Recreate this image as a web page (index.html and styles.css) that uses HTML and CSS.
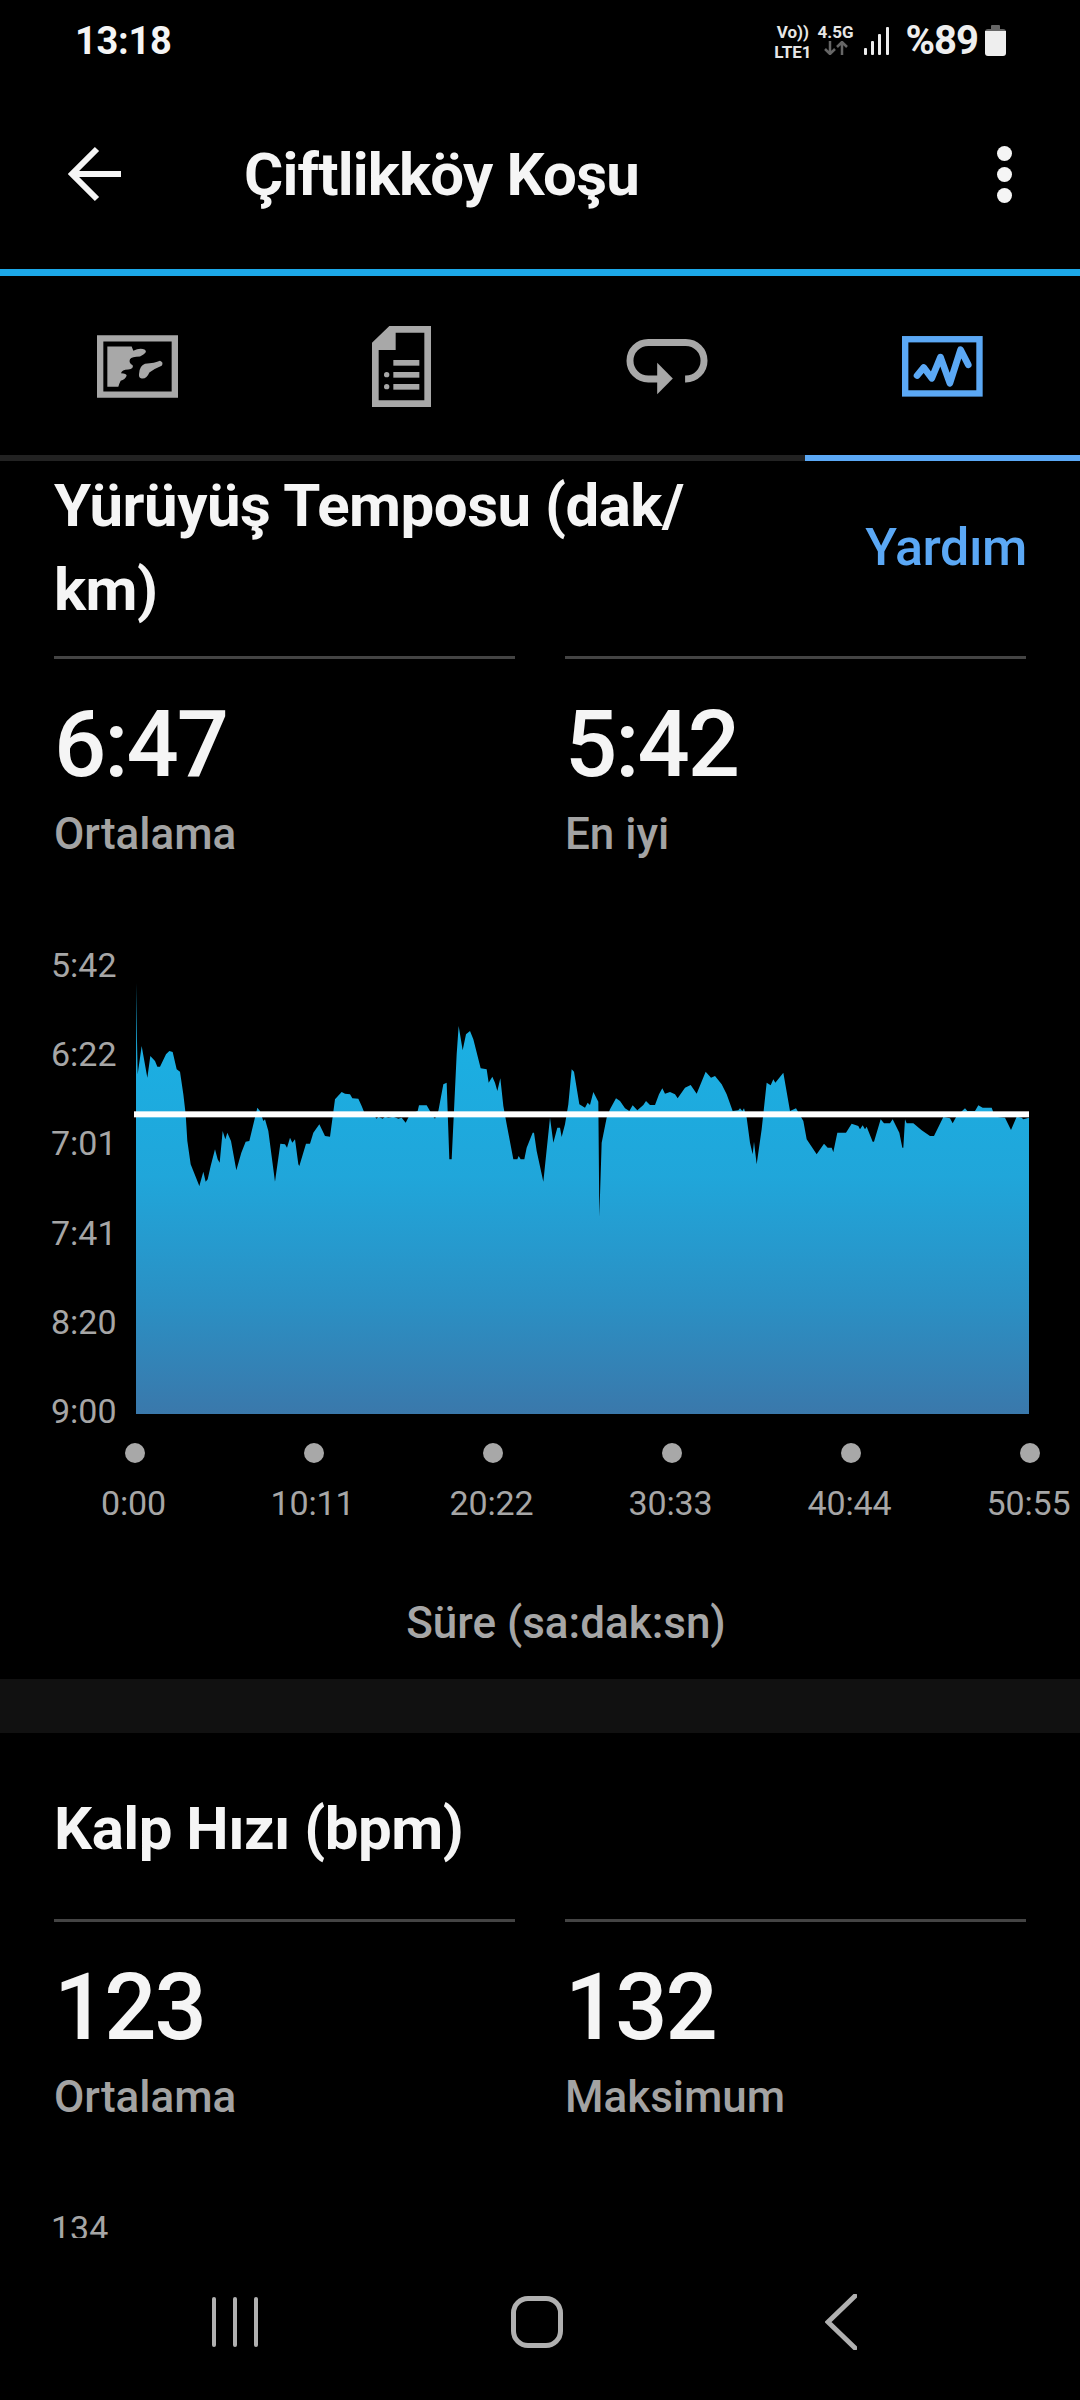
FILE: index.html
```html
<!DOCTYPE html>
<html lang="tr">
<head>
<meta charset="utf-8">
<title>Çiftlikköy Koşu</title>
<link rel="stylesheet" href="styles.css">
</head>
<body>
<div class="phone">
  <div class="status">
    <span class="time">13:18</span>
    <div class="status-right">
      <div class="net"><span class="volte">Vo))</span><span>LTE1</span></div>
      <div class="net net-g"><span>4.5G</span>
        <svg class="arrows" viewBox="0 0 24 14" width="24" height="14"><path d="M6 0V13M1 8l5 5 5-5" class="arrow-dim"/><path d="M18 14V1M13 6l5-5 5 5" class="arrow-dim"/></svg>
      </div>
      <svg class="signal" viewBox="0 0 25 28" width="25" height="28"><rect x="0" y="21" width="3" height="7" rx="1"/><rect x="7" y="14" width="3" height="14" rx="1"/><rect x="14" y="7" width="3" height="21" rx="1"/><rect x="22" y="0" width="3" height="28" rx="1"/></svg>
      <span class="pct">%89</span>
      <svg class="battery" viewBox="0 0 21 31" width="21" height="31"><path class="bat-top" d="M7 0h7a1 1 0 0 1 1 1v3h3a3 3 0 0 1 3 3v3H0V7a3 3 0 0 1 3-3h3V1a1 1 0 0 1 1-1z"/><path class="bat-body" d="M0 6h21v22a3 3 0 0 1-3 3H3a3 3 0 0 1-3-3z"/></svg>
    </div>
  </div>

  <header class="appbar">
    <svg class="back" viewBox="0 0 60 60" width="60" height="60"><path d="M36 4 11 29l25 25M11 29h50"/></svg>
    <h1 class="appbar-title">Çiftlikköy Koşu</h1>
    <div class="kebab"><i></i><i></i><i></i></div>
  </header>

  <nav class="tabs">
    <div class="tab">
      <svg viewBox="111 108 243 188" width="81" height="63" class="ico-gray"><path fill-rule="evenodd" d="M111 108H354V296H111ZM130 127V277H335V127Z"/><path d="M142 142H215L220 155Q240 145 255 152Q265 160 240 172Q215 172 210 180Q205 190 218 198Q222 208 205 211Q185 212 183 222Q200 222 200 230Q195 242 182 245Q177 255 175 263H142Z"/><path d="M237 225Q238 200 255 194Q285 192 300 185Q312 190 305 200Q285 208 268 220Q260 240 245 238Q236 236 237 225Z"/></svg>
    </div>
    <div class="tab">
      <svg viewBox="936 78 177 243" width="59" height="81" class="ico-gray"><path fill-rule="evenodd" d="M988 78H1113V321H936V128ZM956 150V301H1093V98H1007V150Z"/><rect x="1000" y="180" width="78" height="17"/><rect x="1000" y="216" width="78" height="17"/><rect x="1000" y="252" width="78" height="17"/><circle cx="980" cy="224" r="8"/><circle cx="980" cy="260" r="8"/></svg>
    </div>
    <div class="tab">
      <svg viewBox="40 50 265 180" width="88" height="60" class="ico-gray"><path class="loop" d="M227 176H229A55 55 0 0 0 229 66H116A55 55 0 0 0 116 176H150"/><path d="M143 127 190 175 143 222Z"/></svg>
    </div>
    <div class="tab tab-active">
      <svg viewBox="877 49 242 182" width="81" height="61" class="ico-blue"><rect class="frame" x="886.5" y="58.5" width="222" height="162"/><path class="wave" d="M922 167 942 143 966 175 992 112 1020 190 1052 90 1075 135"/></svg>
    </div>
  </nav>

  <main class="scroll">
    <section class="metric">
      <div class="metric-head">
        <h2 class="metric-title metric-title-wrap">Yürüyüş Temposu (dak/<wbr>km)</h2>
        <a class="help">Yardım</a>
      </div>
      <div class="stats">
        <div class="stat"><div class="stat-value">6:47</div><div class="stat-label">Ortalama</div></div>
        <div class="stat"><div class="stat-value">5:42</div><div class="stat-label">En iyi</div></div>
      </div>
      <div class="chart-row">
        <div class="y-axis"><span>5:42</span><span>6:22</span><span>7:01</span><span>7:41</span><span>8:20</span><span>9:00</span></div>
        <svg class="plot" viewBox="282 96 2685 1293" width="895" height="431">
          <defs>
            <linearGradient id="pace" gradientUnits="userSpaceOnUse" x1="0" y1="96" x2="0" y2="1389">
              <stop offset="0" stop-color="#19b3e6"/>
              <stop offset="0.45" stop-color="#20a6da"/>
              <stop offset="0.75" stop-color="#2b8fc3"/>
              <stop offset="1" stop-color="#3a78ab"/>
            </linearGradient>
          </defs>
          <path fill="url(#pace)" d="M288 1389V370L289 96 291 270 293 370 305 285 322 380 331 315 345 330 352 347 360 347 378 310 388 300 398 303 410 355 420 362 430 430 437 490 442 570 452 640 478 705 490 662 497 692 503 685 512 645 525 595 533 625 539 635 548 540 556 565 562 545 573 570 589 658 604 605 617 572 628 570 652 470 660 480 670 510 675 505 685 540 705 692 721 578 735 580 741 590 750 560 757 575 765 565 775 640 778 645 798 578 810 578 820 545 838 520 855 555 870 557 885 445 905 423 915 428 930 430 937 442 955 443 965 465 975 490 1005 497 1010 503 1015 497 1028 503 1035 497 1045 500 1060 497 1075 503 1085 500 1097 515 1110 490 1133 480 1137 463 1160 463 1170 480 1180 497 1185 503 1195 480 1210 400 1220 395 1228 625 1235 625 1250 310 1256 225 1268 298 1278 250 1290 240 1300 265 1322 352 1340 355 1346 395 1357 377 1365 395 1372 420 1381 382 1390 465 1400 520 1420 625 1432 625 1436 615 1442 625 1453 625 1460 590 1478 545 1482 545 1490 600 1510 692 1530 500 1540 575 1552 530 1560 530V1389Z"/>
          <path fill="url(#pace)" transform="translate(1560 0)" d="M0 1389V530L5 558 15 520 25 460 35 355 42 362 58 460 75 470 83 455 90 462 100 423 115 452 118 797 125 575 140 500 150 475 168 442 180 450 195 472 208 480 218 463 232 478 250 462 258 450 270 462 285 462 297 430 307 412 315 428 330 423 345 430 353 442 375 410 392 402 410 428 437 362 453 380 465 375 485 400 500 430 518 480 535 478 540 472 547 480 552 472 560 500 570 575 578 610 582 572 590 640 605 535 620 395 632 403 640 385 646 395 670 365 690 480 708 472 730 510 740 565 770 610 792 578 803 590 815 590 820 603 832 545 858 545 875 518 895 525 900 535 908 523 915 535 920 527 938 572 942 572 962 505 972 517 990 517 998 505 1018 545 1027 590 1030 590 1035 505 1040 517 1060 517 1085 538 1110 555 1122 555 1150 498 1170 502 1178 517 1190 495 1215 472 1222 480 1245 480 1255 463 1268 470 1295 470 1305 497 1335 500 1353 537 1370 497 1385 500 1390 505 1407 500V1389Z"/>
          <rect x="282" y="481" width="2685" height="18" fill="#fff"/>
        </svg>
      </div>
      <div class="x-dots"><i></i><i></i><i></i><i></i><i></i><i></i></div>
      <div class="x-labels"><span>0:00</span><span>10:11</span><span>20:22</span><span>30:33</span><span>40:44</span><span>50:55</span></div>
      <div class="x-title">Süre (sa:dak:sn)</div>
    </section>
    <div class="band"></div>
    <section class="metric metric-second">
      <div class="metric-head"><h2 class="metric-title">Kalp Hızı (bpm)</h2></div>
      <div class="stats">
        <div class="stat"><div class="stat-value">123</div><div class="stat-label">Ortalama</div></div>
        <div class="stat"><div class="stat-value">132</div><div class="stat-label">Maksimum</div></div>
      </div>
      <div class="chart-row"><div class="y-axis"><span>134</span></div></div>
    </section>
  </main>

  <footer class="navbar">
    <div class="recents"><i></i><i></i><i></i></div>
    <div class="home"></div>
    <svg class="nav-back" viewBox="0 0 32 56" width="32" height="56"><path d="M30 2 3 28l27 26"/></svg>
  </footer>
</div>
</body>
</html>
```

FILE: styles.css
```css
* { box-sizing: border-box; }
html, body { margin: 0; padding: 0; background: #000; }
.phone {
  width: 1080px; height: 2400px; overflow: hidden;
  display: flex; flex-direction: column;
  background: #000; color: #f5f5f5;
  font-family: Roboto, "Noto Sans", sans-serif;
}
/* status bar */
.status { height: 80px; flex: none; display: flex; justify-content: space-between; align-items: flex-start; padding: 18px 74px 0 75px; }
.time { font-size: 38px; line-height: 46px; font-weight: 700; letter-spacing: -0.3px; }
.status-right { display: flex; align-items: flex-start; }
.net { display: flex; flex-direction: column; align-items: center; font-size: 17px; line-height: 20px; font-weight: 700; color: #e6e6e6; padding-top: 4px; margin-right: 6px; }
.net-g { margin-right: 10px; }
.arrows { margin-top: -1px; }
.arrow-dim { fill: none; stroke: #666; stroke-width: 2.5; }
.signal { fill: #eee; margin-top: 9px; margin-right: 17px; }
.pct { font-size: 40px; line-height: 46px; font-weight: 700; color: #eee; margin-right: 7px; letter-spacing: -1px; }
.battery { margin-top: 7px; }
.bat-top { fill: #666; }
.bat-body { fill: #eee; }
/* app bar */
.appbar { height: 189px; flex: none; display: flex; align-items: center; padding-left: 61px; padding-right: 68px; }
.back { fill: none; stroke: #f5f5f5; stroke-width: 6; flex: none; }
.appbar-title { margin: 0 0 0 123px; flex: 1; font-size: 60px; line-height: 70px; font-weight: 700; letter-spacing: -0.8px; }
.kebab { display: flex; flex-direction: column; gap: 6px; }
.kebab i { display: block; width: 15px; height: 15px; border-radius: 50%; background: #f5f5f5; }
/* tabs */
.tabs { height: 192px; flex: none; border-top: 7px solid #1ca8e8; display: grid; grid-template-columns: 275px 253px 277px 275px; }
.tab { display: flex; align-items: center; justify-content: center; border-bottom: 6px solid #222; padding-top: 2px; }
.tab-active { border-bottom-color: #5ba8f5; }
.ico-gray { fill: #a8a8a8; }
.loop { fill: none; stroke: #a8a8a8; stroke-width: 21; }
.frame { fill: none; stroke: #5ba8f5; stroke-width: 19; }
.wave { fill: none; stroke: #5ba8f5; stroke-width: 20; stroke-linejoin: round; stroke-linecap: round; }
/* content */
.scroll { flex: 1; min-height: 0; overflow: hidden; padding-top: 3px; }
.metric-head { display: flex; align-items: center; justify-content: space-between; padding: 0 53px 0 54px; }
.metric-title { margin: 0; font-size: 60px; line-height: 84px; font-weight: 700; letter-spacing: -0.5px; }
.metric-title-wrap { width: 680px; }
.help { font-size: 52px; line-height: 60px; color: #5ba8f5; font-weight: 500; letter-spacing: -0.4px; }
.stats { display: grid; grid-template-columns: 461px 461px; column-gap: 50px; padding-left: 54px; margin-top: 24px; }
.stat { border-top: 3px solid #444; padding-top: 31px; }
.stat-value { font-size: 92px; line-height: 110px; font-weight: 500; letter-spacing: -2px; }
.stat-label { font-size: 44px; line-height: 52px; color: #a3a3a3; margin-top: 8px; font-weight: 500; }
.chart-row { display: flex; align-items: flex-start; margin-top: 87px; }
.y-axis { width: 134px; flex: none; height: 482px; padding-left: 51px; display: flex; flex-direction: column; justify-content: space-between; font-size: 34px; line-height: 36px; color: #a6a6a6; }
.plot { display: block; margin-top: 36px; flex: none; }
.x-dots { display: grid; grid-template-columns: repeat(6, 179px); margin: 14px 0 0 45px; }
.x-dots i { display: block; width: 20px; height: 20px; border-radius: 50%; background: #a8a8a8; justify-self: center; }
.x-labels { display: grid; grid-template-columns: repeat(6, 179px); margin: 20px 0 0 44px; font-size: 34px; line-height: 40px; color: #a6a6a6; text-align: center; letter-spacing: -0.1px; }
.x-title { margin: 74px 0 0 52px; text-align: center; font-size: 44px; line-height: 52px; color: #a6a6a6; font-weight: 500; }
.band { height: 54px; margin-top: 30px; background: #111; }
.metric-second { padding-top: 54px; }
.metric-second .stats { margin-top: 48px; }
.metric-second .chart-row { margin-top: 87px; }
/* navigation bar */
.navbar { height: 162px; flex: none; display: flex; align-items: flex-start; padding-top: 58px; }
.recents { margin-left: 212px; display: flex; gap: 17px; padding-top: 1px; }
.recents i { display: block; width: 4px; height: 50px; border-radius: 2px; background: #b0b0b0; }
.home { width: 52px; height: 52px; margin-left: 253px; border: 5px solid #b0b0b0; border-radius: 17px; }
.nav-back { margin-left: 262px; margin-top: -2px; fill: none; stroke: #b0b0b0; stroke-width: 5; stroke-linecap: round; }
```
